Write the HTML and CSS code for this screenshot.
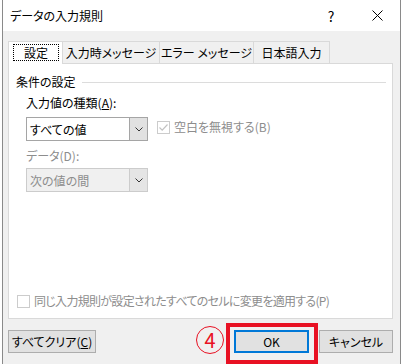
FILE: index.html
```html
<!DOCTYPE html>
<html lang="ja">
<head>
    <meta charset="UTF-8">
    <title>データの入力規則</title>
    <link rel="stylesheet" href="styles.css">
</head>
<body>
    <div class="window">
        <div class="titlebar">
            <span class="title">データの入力規則</span>
            <span class="help">?</span>
            <svg class="close" width="11" height="11" viewBox="0 0 11 11">
                <path d="M0.5 0.5 L10.5 10.5 M10.5 0.5 L0.5 10.5" stroke="#000" stroke-width="1" fill="none"/>
            </svg>
        </div>

        <div class="content">
            <div class="tabs">
                <div class="tab active"><span class="focus">設定</span></div>
                <div class="tab w2">入力時メッセージ</div>
                <div class="tab w3">エラー メッセージ</div>
                <div class="tab w4">日本語入力</div>
            </div>

            <div class="panel">
                <div class="group">
                    <span>条件の設定</span>
                    <div class="rule"></div>
                </div>

                <div class="label">入力値の種類(<u>A</u>):</div>
                <div class="row">
                    <div class="select">
                        <span class="value">すべての値</span>
                        <span class="arrow">
                            <svg width="8" height="5" viewBox="0 0 8 5"><path d="M0.5 0.5 L4 4 L7.5 0.5" stroke="#333" fill="none"/></svg>
                        </span>
                    </div>
                    <label class="check disabled">
                        <span class="box">
                            <svg width="11" height="11" viewBox="0 0 11 11"><path d="M1.5 5.5 L4.2 8.2 L9.5 2.5" stroke="#c2c2c2" stroke-width="1.2" fill="none"/></svg>
                        </span>
                        空白を無視する(B)
                    </label>
                </div>

                <div class="label disabled second">データ(D):</div>
                <div class="select off">
                    <span class="value">次の値の間</span>
                    <span class="arrow">
                        <svg width="8" height="5" viewBox="0 0 8 5"><path d="M0.5 0.5 L4 4 L7.5 0.5" stroke="#333" fill="none"/></svg>
                    </span>
                </div>

                <label class="check disabled bottom">
                    <span class="box"></span>
                    <span class="tight">同じ入力規則が設定されたすべてのセルに変更を適用する(P)</span>
                </label>
            </div>

            <div class="buttons">
                <button class="btn clear">すべてクリア(<u>C</u>)</button>
                <button class="btn ok">OK</button>
                <button class="btn cancel">キャンセル</button>
            </div>
        </div>

        <!-- annotation -->
        <div class="mark">4</div>
        <div class="highlight"></div>
    </div>
</body>
</html>
```

FILE: styles.css
```css
body {
    margin: 0;
    background: #fff;
    font-family: "Noto Sans CJK JP", sans-serif;
    font-size: 12px;
    font-feature-settings: "palt";
    color: #000;
}

.window {
    position: relative;
    margin-left: 2px;
    width: 397px;
    height: 364px;
    border-left: 1px solid #8a8a8a;
    border-right: 1px solid #8a8a8a;
    background: #f0f0f0;
    overflow: hidden;
}

.titlebar {
    display: flex;
    align-items: center;
    height: 31px;
    padding-left: 7px;
    background: #fff;
}

.title {
    flex: 1;
    line-height: 16px;
}

.help {
    width: 8px;
    text-align: center;
    font-size: 14px;
    margin-right: 37px;
}

.close {
    margin-right: 17px;
}

.content {
    padding: 10px 7px 0 5px;
}

.tabs {
    display: flex;
    height: 22px;
}

.tab {
    display: flex;
    align-items: center;
    justify-content: center;
    box-sizing: border-box;
    height: 22px;
    border: 1px solid #d9d9d9;
    border-bottom: none;
    border-left: none;
    background: #f0f0f0;
    line-height: 16px;
}

.tab.active {
    width: 55px;
    border-left: 1px solid #d9d9d9;
    background: #fff;
    position: relative;
    z-index: 1;
    height: 23px;
    margin-bottom: -1px;
    padding: 2px 3px 3px 4px;
}

.focus {
    flex: 1;
    align-self: stretch;
    display: flex;
    align-items: center;
    justify-content: center;
    border: 1px dotted #000;
}

.w2 { width: 97px; }
.w3 { width: 94px; }
.w4 { width: 76px; }

.panel {
    display: flex;
    flex-direction: column;
    box-sizing: border-box;
    height: 256px;
    border: 1px solid #d9d9d9;
    background: #fff;
    padding: 10px 6px 9px 7px;
}

.group {
    display: flex;
    align-items: center;
    line-height: 16px;
}

.rule {
    flex: 1;
    height: 1px;
    margin-left: 6px;
    background: #dcdcdc;
}

.label {
    margin: 5px 0 0 10px;
    line-height: 16px;
}

.label.second {
    margin-top: 7px;
}

.disabled {
    color: #8d8d8d;
}

.row {
    display: flex;
    align-items: flex-start;
    margin-top: 6px;
}

.select {
    display: flex;
    box-sizing: border-box;
    width: 122px;
    height: 24px;
    margin-left: 10px;
    border: 1px solid #a5a5a5;
    background: #fff;
}

.select.off {
    margin-top: 4px;
    border-color: #cccccc;
    background: #f0f0f0;
    color: #8d8d8d;
}

.select .value {
    flex: 1;
    display: flex;
    align-items: center;
    padding-left: 3px;
}

.select .arrow {
    display: flex;
    align-items: center;
    justify-content: center;
    width: 17px;
    background: #e1e1e1;
    border-left: 1px solid #a5a5a5;
}

.select.off .arrow {
    background: #e5e5e5;
    border-left-color: #cccccc;
}

.check {
    display: flex;
    align-items: center;
    line-height: 16px;
}

.row .check {
    margin: 2px 0 0 9px;
}

.box {
    display: flex;
    align-items: center;
    justify-content: center;
    box-sizing: border-box;
    width: 13px;
    height: 13px;
    margin-right: 4px;
    border: 1px solid #cccccc;
    background: #fff;
}

.check.bottom {
    margin-top: auto;
    margin-left: 1px;
}

.tight {
    letter-spacing: -0.7px;
}

.buttons {
    display: flex;
    margin-top: 11px;
}

.btn {
    box-sizing: border-box;
    height: 23px;
    padding: 0;
    border: 1px solid #adadad;
    background: #e1e1e1;
    font-family: inherit;
    font-size: 12px;
    font-feature-settings: "palt";
    color: #000;
}

.btn.clear {
    width: 88px;
}

.btn.ok {
    width: 75px;
    margin-left: auto;
    border: 2px solid #0078d7;
}

.btn.cancel {
    width: 74px;
    margin-left: 10px;
}

.mark {
    position: absolute;
    left: 193px;
    top: 326px;
    box-sizing: border-box;
    width: 28px;
    height: 28px;
    border: 1.5px solid #e81123;
    border-radius: 50%;
    color: #e81123;
    font-size: 20px;
    line-height: 25px;
    text-align: center;
}

.highlight {
    position: absolute;
    left: 223px;
    top: 323px;
    box-sizing: border-box;
    width: 92px;
    height: 41px;
    border: 4px solid #e81123;
}
```
